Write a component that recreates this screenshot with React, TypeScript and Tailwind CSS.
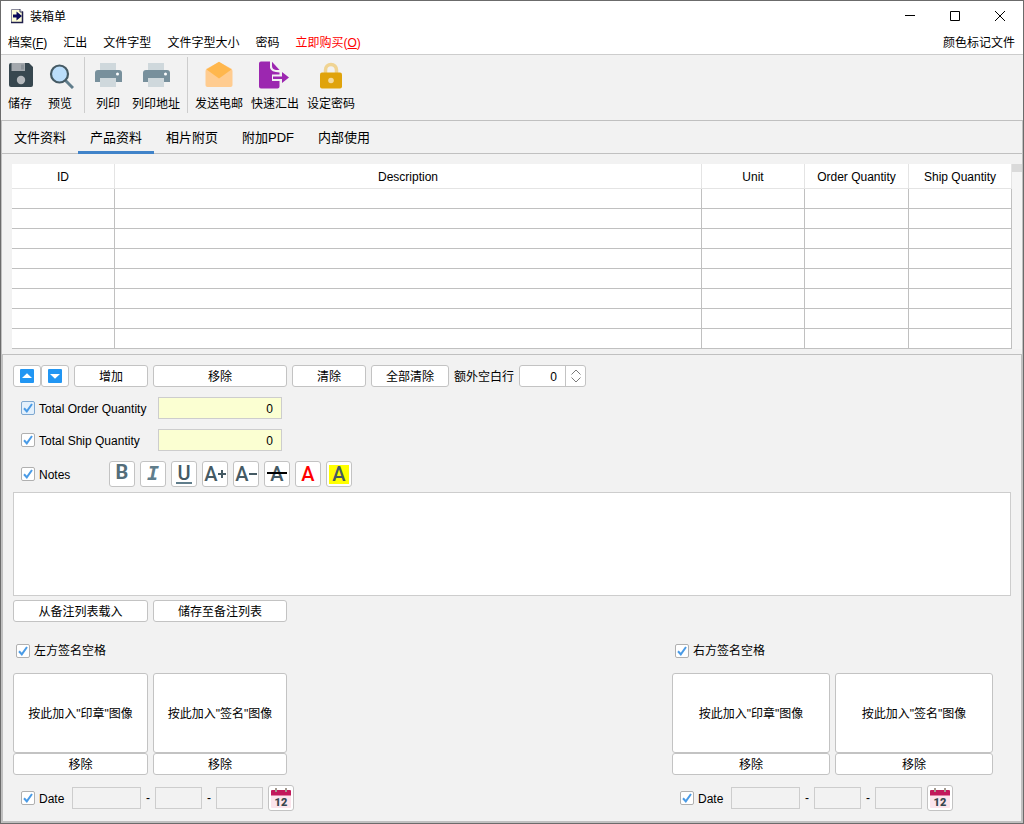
import { useState, type ReactNode } from "react";

const BUTTON =
  "flex items-center justify-center rounded-[3px] border border-[#c3c3c3] bg-white hover:bg-[#f7fbff]";

const COLUMNS = [
  { title: "ID", width: "w-[103px]" },
  { title: "Description", width: "" },
  { title: "Unit", width: "w-[103px]" },
  { title: "Order Quantity", width: "w-[104px]" },
  { title: "Ship Quantity", width: "w-[103px]" },
];

const TABS = ["文件资料", "产品资料", "相片附页", "附加PDF", "内部使用"];

/* ---------- icons ---------- */

function AppIcon() {
  return (
    <svg width="14" height="16" viewBox="0 0 14 16">
      <path d="M1.500 1.500H10L12.500 4V14.500H1.500Z" fill="#ffffd8" stroke="#8a8a9c" />
      <path d="M10 1V4H13" fill="#fff" stroke="#3c3c5c" />
      <path d="M12.500 3.500V14.500H1" fill="none" stroke="#20204c" strokeWidth="1.500" />
      <path d="M3 6.500H6.500V3.500L12 8L6.500 12.500V9.500H3Z" fill="#0a0a5a" />
    </svg>
  );
}

function SaveIcon() {
  return (
    <svg width="28" height="28" viewBox="0 0 28 28">
      <path d="M5 2H23L27 6V24A2 2 0 0 1 25 26H5A2 2 0 0 1 3 24V4A2 2 0 0 1 5 2Z" fill="#37474f" />
      <path d="M5.500 2H19V10H5.500Z" fill="#a3a8ad" />
      <path d="M15 3.500H18V8.500H15Z" fill="#8b9399" />
      <circle cx="15" cy="19" r="4.200" fill="#b4b8bc" />
    </svg>
  );
}

function PreviewIcon() {
  return (
    <svg width="28" height="28" viewBox="0 0 28 28">
      <path d="M19 19L27 27" stroke="#607d8b" strokeWidth="3" />
      <circle cx="13.500" cy="13" r="8.500" fill="#bbdefb" stroke="#455a64" strokeWidth="2.200" />
    </svg>
  );
}

function PrinterIcon() {
  return (
    <svg width="28" height="28" viewBox="0 0 28 28">
      <path d="M6 2H22V9H6Z" fill="#cfd8dc" />
      <path d="M4 9H25A3 3 0 0 1 28 12V21H1V12A3 3 0 0 1 4 9Z" fill="#78909c" />
      <path d="M6 17H22V26H6Z" fill="#cfd8dc" />
      <circle cx="23.500" cy="13" r="1.500" fill="#fff" />
    </svg>
  );
}

function MailIcon() {
  return (
    <svg width="28" height="28" viewBox="0 0 28 28">
      <path d="M14 1L26 7.500Q27.500 8.500 27.500 10V24A2 2 0 0 1 25.500 26H2.500A2 2 0 0 1 .5 24V10Q.5 8.500 2 7.500Z" fill="#ffcc90" />
      <path d="M14 .8L26.500 8.500L14 17.500L1.500 8.500Z" fill="#ffb74d" />
    </svg>
  );
}

function ExportIcon() {
  return (
    <svg width="28" height="28" viewBox="0 0 28 28" className="overflow-visible">
      <path d="M0 .5H9V7Q10 11 18.500 11.500V25.500A2 2 0 0 1 16.500 27.500H0A2 2 0 0 1 -2 25.500V2.500A2 2 0 0 1 0 .5Z" fill="#9c27b0" />
      <path d="M11 .8L18.500 9H15Q11 8.500 11 5Z" fill="#9c27b0" />
      <path d="M11 13.500H19V20H11Z" fill="#f2f2f2" />
      <path d="M12 15.500H21V11L28 16.500L21 22V18H12Z" fill="#9c27b0" />
    </svg>
  );
}

function LockIcon() {
  return (
    <svg width="28" height="28" viewBox="0 0 28 28">
      <path d="M8.500 13V9A5.500 5.500 0 0 1 19.500 9V13" fill="none" stroke="#f0d493" strokeWidth="3.500" />
      <rect x="3" y="11.500" width="22" height="16" rx="2" fill="#e0a30b" />
      <circle cx="14" cy="19.500" r="2.800" fill="#f3da9c" />
    </svg>
  );
}

function ArrowBox({ down = false }: { down?: boolean }) {
  return (
    <svg width="14" height="14" viewBox="0 0 14 14">
      <rect width="14" height="14" rx="1" fill="#2196f3" />
      <path d={down ? "M2 5H12L7 9.800Z" : "M2 9H12L7 4.200Z"} fill="#fff" />
    </svg>
  );
}

function CalendarIcon() {
  return (
    <svg width="22" height="22" viewBox="0 0 22 22">
      <path d="M1 6H21V20A1 1 0 0 1 20 21H2A1 1 0 0 1 1 20Z" fill="#fce4ec" />
      <path d="M2 3H20A1 1 0 0 1 21 4V8.500H1V4A1 1 0 0 1 2 3Z" fill="#c2185b" />
      <path d="M6 1V5M16 1V5" stroke="#a59a8f" strokeWidth="2" />
      <text x="11" y="19" textAnchor="middle" fontSize="11" fontWeight="900" fill="#37474f" fontFamily="Roboto, sans-serif">
        12
      </text>
    </svg>
  );
}

/* ---------- controls ---------- */

function CheckBox({ label, className = "", active = false }: { label: string; className?: string; active?: boolean }) {
  const [checked, setChecked] = useState(true);
  return (
    <label className={`flex items-center gap-1 whitespace-nowrap leading-4 ${className}`}>
      <span className="grid">
        <input
          type="checkbox"
          checked={checked}
          onChange={(e) => setChecked(e.target.checked)}
          className={`col-start-1 row-start-1 size-3.5 appearance-none rounded-[2px] border ${
            active ? "border-[#7fa8d0] bg-[#e3f0fc]" : "border-[#b0b0b0] bg-white"
          }`}
        />
        {checked && (
          <svg width="14" height="14" viewBox="0 0 14 14" className="pointer-events-none col-start-1 row-start-1">
            <path d="M3 7.300L5.800 10.300L11 3" fill="none" stroke="#4a9be6" strokeWidth="2" />
          </svg>
        )}
      </span>
      <span className="pt-px">{label}</span>
    </label>
  );
}

function TextButton({ className, children }: { className: string; children: ReactNode }) {
  return <button className={`${BUTTON} pt-0.5 leading-4 whitespace-nowrap ${className}`}>{children}</button>;
}

function ToolButton({ icon, label }: { icon: ReactNode; label: string }) {
  return (
    <button className="flex min-w-7 flex-col items-center gap-[7px] leading-4 whitespace-nowrap">
      {icon}
      {label}
    </button>
  );
}

function Separator() {
  return <div className="-mt-1 h-14 w-px bg-[#cdcdcd]" />;
}

function FormatButton({ title, children }: { title: string; children: ReactNode }) {
  return (
    <button
      title={title}
      className={`${BUTTON} relative size-[26px] font-[Roboto,sans-serif] text-[20px] leading-5 font-medium text-[#455a64]`}
    >
      {children}
    </button>
  );
}

function DateRow({ side }: { side: string }) {
  const field = "h-[22px] border border-[#cdcdcd] bg-[#f2f2f2] px-1";
  return (
    <div className="mt-2.5 flex items-center">
      <CheckBox label="Date" className="w-[59px] pl-2" />
      <input aria-label={`${side} year`} className={`${field} w-[69px]`} />
      <span className="w-3.5 text-center">-</span>
      <input aria-label={`${side} month`} className={`${field} w-[47px]`} />
      <span className="w-3.5 text-center">-</span>
      <input aria-label={`${side} day`} className={`${field} w-[47px]`} />
      <button aria-label={`${side} calendar`} className={`${BUTTON} ml-[5px] size-[26px]`}>
        <CalendarIcon />
      </button>
    </div>
  );
}

function Signature({ side, label, widths }: { side: string; label: string; widths: [string, string] }) {
  return (
    <div>
      <CheckBox label={label} className="pl-[3px]" />
      <div className="mt-3.5 flex gap-[5px]">
        {["印章", "签名"].map((kind, i) => (
          <div key={kind} className={`flex flex-col ${widths[i]}`}>
            <TextButton className="h-20">按此加入"{kind}"图像</TextButton>
            <TextButton className="h-[22px]">移除</TextButton>
          </div>
        ))}
      </div>
      <DateRow side={side} />
    </div>
  );
}

/* ---------- sections ---------- */

function TitleBar() {
  return (
    <header className="flex h-[29px] items-center bg-white pl-[9px]">
      <AppIcon />
      <h1 className="ml-1.5 flex-1 pt-0.5 leading-4">装箱单</h1>
      <button aria-label="Minimize" className="flex h-full w-[46px] items-center justify-center">
        <svg width="10" height="10" viewBox="0 0 10 10">
          <path d="M0 4.500H10" stroke="#000" />
        </svg>
      </button>
      <button aria-label="Maximize" className="flex h-full w-11 items-center justify-center">
        <svg width="10" height="10" viewBox="0 0 10 10">
          <path d="M.5 .5H9.500V9.500H.5Z" fill="none" stroke="#000" />
        </svg>
      </button>
      <button aria-label="Close" className="flex h-full w-[46px] items-center justify-center">
        <svg width="10" height="10" viewBox="0 0 10 10">
          <path d="M0 0L10 10M10 0L0 10" stroke="#000" />
        </svg>
      </button>
    </header>
  );
}

function MenuBar() {
  return (
    <nav className="flex h-[25px] items-center gap-4 border-b border-[#cdcdcd] bg-white pt-0.5 pr-2 pl-[7px] leading-4">
      <button>
        档案(<u>F</u>)
      </button>
      <button>汇出</button>
      <button>文件字型</button>
      <button>文件字型大小</button>
      <button>密码</button>
      <button className="text-[#ff0000]">
        立即购买(<u>O</u>)
      </button>
      <button className="ml-auto">颜色标记文件</button>
    </nav>
  );
}

function Toolbar() {
  return (
    <div className="flex h-[65px] items-start pt-1.5 pl-[5px]">
      <div className="flex gap-3 pr-[10px]">
        <ToolButton icon={<SaveIcon />} label="储存" />
        <ToolButton icon={<PreviewIcon />} label="预览" />
      </div>
      <Separator />
      <div className="flex gap-2.5 pr-[7px] pl-[9px]">
        <ToolButton icon={<PrinterIcon />} label="列印" />
        <ToolButton icon={<PrinterIcon />} label="列印地址" />
      </div>
      <Separator />
      <div className="flex gap-2 pl-[7px]">
        <ToolButton icon={<MailIcon />} label="发送电邮" />
        <ToolButton icon={<ExportIcon />} label="快速汇出" />
        <ToolButton icon={<LockIcon />} label="设定密码" />
      </div>
    </div>
  );
}

function ProductTable() {
  return (
    <div className="flex pt-2.5 pb-[5px] pl-2.5">
      <table className="flex-1 table-fixed border-separate border-spacing-0 bg-white">
        <thead>
          <tr className="h-[25px]">
            {COLUMNS.map((col) => (
              <th key={col.title} className={`border-r border-b border-[#e4e4e4] p-0 pt-0.5 leading-4 font-normal ${col.width}`}>
                {col.title}
              </th>
            ))}
          </tr>
        </thead>
        <tbody>
          {Array.from({ length: 8 }, (_, row) => (
            <tr key={row} className="h-5">
              {COLUMNS.map((col) => (
                <td key={col.title} className="border-r border-b border-[#c0c0c0] p-0" />
              ))}
            </tr>
          ))}
        </tbody>
      </table>
      <div className="w-2.5 bg-[#f5f5f5]">
        <div className="h-2 bg-[#dadada]" />
      </div>
    </div>
  );
}

export default function App() {
  const [tab, setTab] = useState("产品资料");
  const [blankRows, setBlankRows] = useState(0);
  const total = "h-[22px] w-[124px] border border-[#cdcdcd] bg-[#fbffd2] pt-0.5 px-2 text-right";

  return (
    <div className="flex min-h-screen flex-col border border-[#6b6b6b] bg-[#f2f2f2] font-['Liberation_Sans','Noto_Sans_CJK_SC',sans-serif] text-[12px] text-black">
      <TitleBar />
      <MenuBar />
      <Toolbar />

      <main className="flex flex-1 flex-col border border-[#c0c0c0]">
        <div role="tablist" className="flex h-[33px] border-b border-[#c0c0c0]">
          {TABS.map((name) => (
            <button
              key={name}
              role="tab"
              aria-selected={tab === name}
              onClick={() => setTab(name)}
              className={`h-[33px] border-b-3 px-3 pt-1 text-[13px] leading-5 whitespace-nowrap ${
                tab === name ? "border-[#4083c9]" : "border-transparent"
              }`}
            >
              {name}
            </button>
          ))}
        </div>

        <ProductTable />

        <section className="flex flex-1 flex-col border border-[#c0c0c0] p-2.5">
          <div className="flex flex-col gap-2.5">
            <div className="flex items-center">
              <button aria-label="Move up" className={`${BUTTON} h-[22px] w-7`}>
                <ArrowBox />
              </button>
              <button aria-label="Move down" className={`${BUTTON} h-[22px] w-7`}>
                <ArrowBox down />
              </button>
              <div className="ml-[5px] flex gap-[5px]">
                <TextButton className="h-[22px] w-[74px]">增加</TextButton>
                <TextButton className="h-[22px] w-[134px]">移除</TextButton>
                <TextButton className="h-[22px] w-[74px]">清除</TextButton>
                <TextButton className="h-[22px] w-[78px]">全部清除</TextButton>
              </div>
              <label htmlFor="blank-rows" className="mx-[5px] pt-0.5 leading-4">
                额外空白行
              </label>
              <div className="flex h-[22px] w-[67px] rounded-[3px] border border-[#c3c3c3] bg-white">
                <input
                  id="blank-rows"
                  value={blankRows}
                  onChange={(e) => setBlankRows(Number(e.target.value) || 0)}
                  className="min-w-0 flex-1 pt-0.5 pr-2 text-right"
                />
                <div className="flex w-5 flex-col items-center justify-center gap-0.5 border-l border-[#c3c3c3]">
                  <button aria-label="Increase" onClick={() => setBlankRows(blankRows + 1)}>
                    <svg width="10" height="6" viewBox="0 0 10 6" className="block">
                      <path d="M.5 5.500L5 1L9.500 5.500" fill="none" stroke="#7a7a7a" />
                    </svg>
                  </button>
                  <button aria-label="Decrease" onClick={() => setBlankRows(Math.max(0, blankRows - 1))}>
                    <svg width="10" height="6" viewBox="0 0 10 6" className="block">
                      <path d="M.5 .5L5 5L9.500 .5" fill="none" stroke="#7a7a7a" />
                    </svg>
                  </button>
                </div>
              </div>
            </div>

            <div className="flex items-center">
              <CheckBox label="Total Order Quantity" className="w-[145px] pl-2" active />
              <input aria-label="Total order quantity value" defaultValue="0" className={total} />
            </div>
            <div className="flex items-center">
              <CheckBox label="Total Ship Quantity" className="w-[145px] pl-2" />
              <input aria-label="Total ship quantity value" defaultValue="0" className={total} />
            </div>

            <div className="flex items-center">
              <CheckBox label="Notes" className="w-24 pl-2" />
              <div className="flex gap-[5px]">
                <FormatButton title="Bold">
                  <span className="pb-1 font-bold text-[#546e7a]">B</span>
                </FormatButton>
                <FormatButton title="Italic">
                  <span className="pb-0.5 font-['DejaVu_Sans_Mono',monospace] font-bold text-[#607d8b] italic">I</span>
                </FormatButton>
                <FormatButton title="Underline">
                  <span className="w-4 border-b-2 border-[#607d8b] leading-[18px]">U</span>
                </FormatButton>
                <FormatButton title="Larger text">
                  <span>A</span>
                  <svg width="8" height="8" viewBox="0 0 8 8">
                    <path d="M4 0V8M0 4H8" stroke="#455a64" strokeWidth="2" />
                  </svg>
                </FormatButton>
                <FormatButton title="Smaller text">
                  <span>A</span>
                  <svg width="8" height="8" viewBox="0 0 8 8">
                    <path d="M0 4H8" stroke="#455a64" strokeWidth="2" />
                  </svg>
                </FormatButton>
                <FormatButton title="Strikethrough">
                  <span>A</span>
                  <span className="absolute inset-x-0.5 top-2.5 h-0.5 bg-black" />
                </FormatButton>
                <FormatButton title="Text colour">
                  <span className="text-[#ff0000]">A</span>
                </FormatButton>
                <FormatButton title="Highlight">
                  <span className="h-[19px] w-5 bg-[#ffff00] leading-[19px]">A</span>
                </FormatButton>
              </div>
            </div>
          </div>

          <textarea aria-label="Notes text" className="mt-[5px] h-[104px] resize-none border border-[#cdcdcd] bg-white p-1" />

          <div className="mt-1 flex gap-[5px]">
            <TextButton className="h-[22px] w-[135px]">从备注列表载入</TextButton>
            <TextButton className="h-[22px] w-[134px]">储存至备注列表</TextButton>
          </div>

          <div className="mt-5 flex justify-between pr-[18px]">
            <Signature side="Left" label="左方签名空格" widths={["w-[135px]", "w-[134px]"]} />
            <Signature side="Right" label="右方签名空格" widths={["w-[158px]", "w-[158px]"]} />
          </div>
        </section>
      </main>
    </div>
  );
}
